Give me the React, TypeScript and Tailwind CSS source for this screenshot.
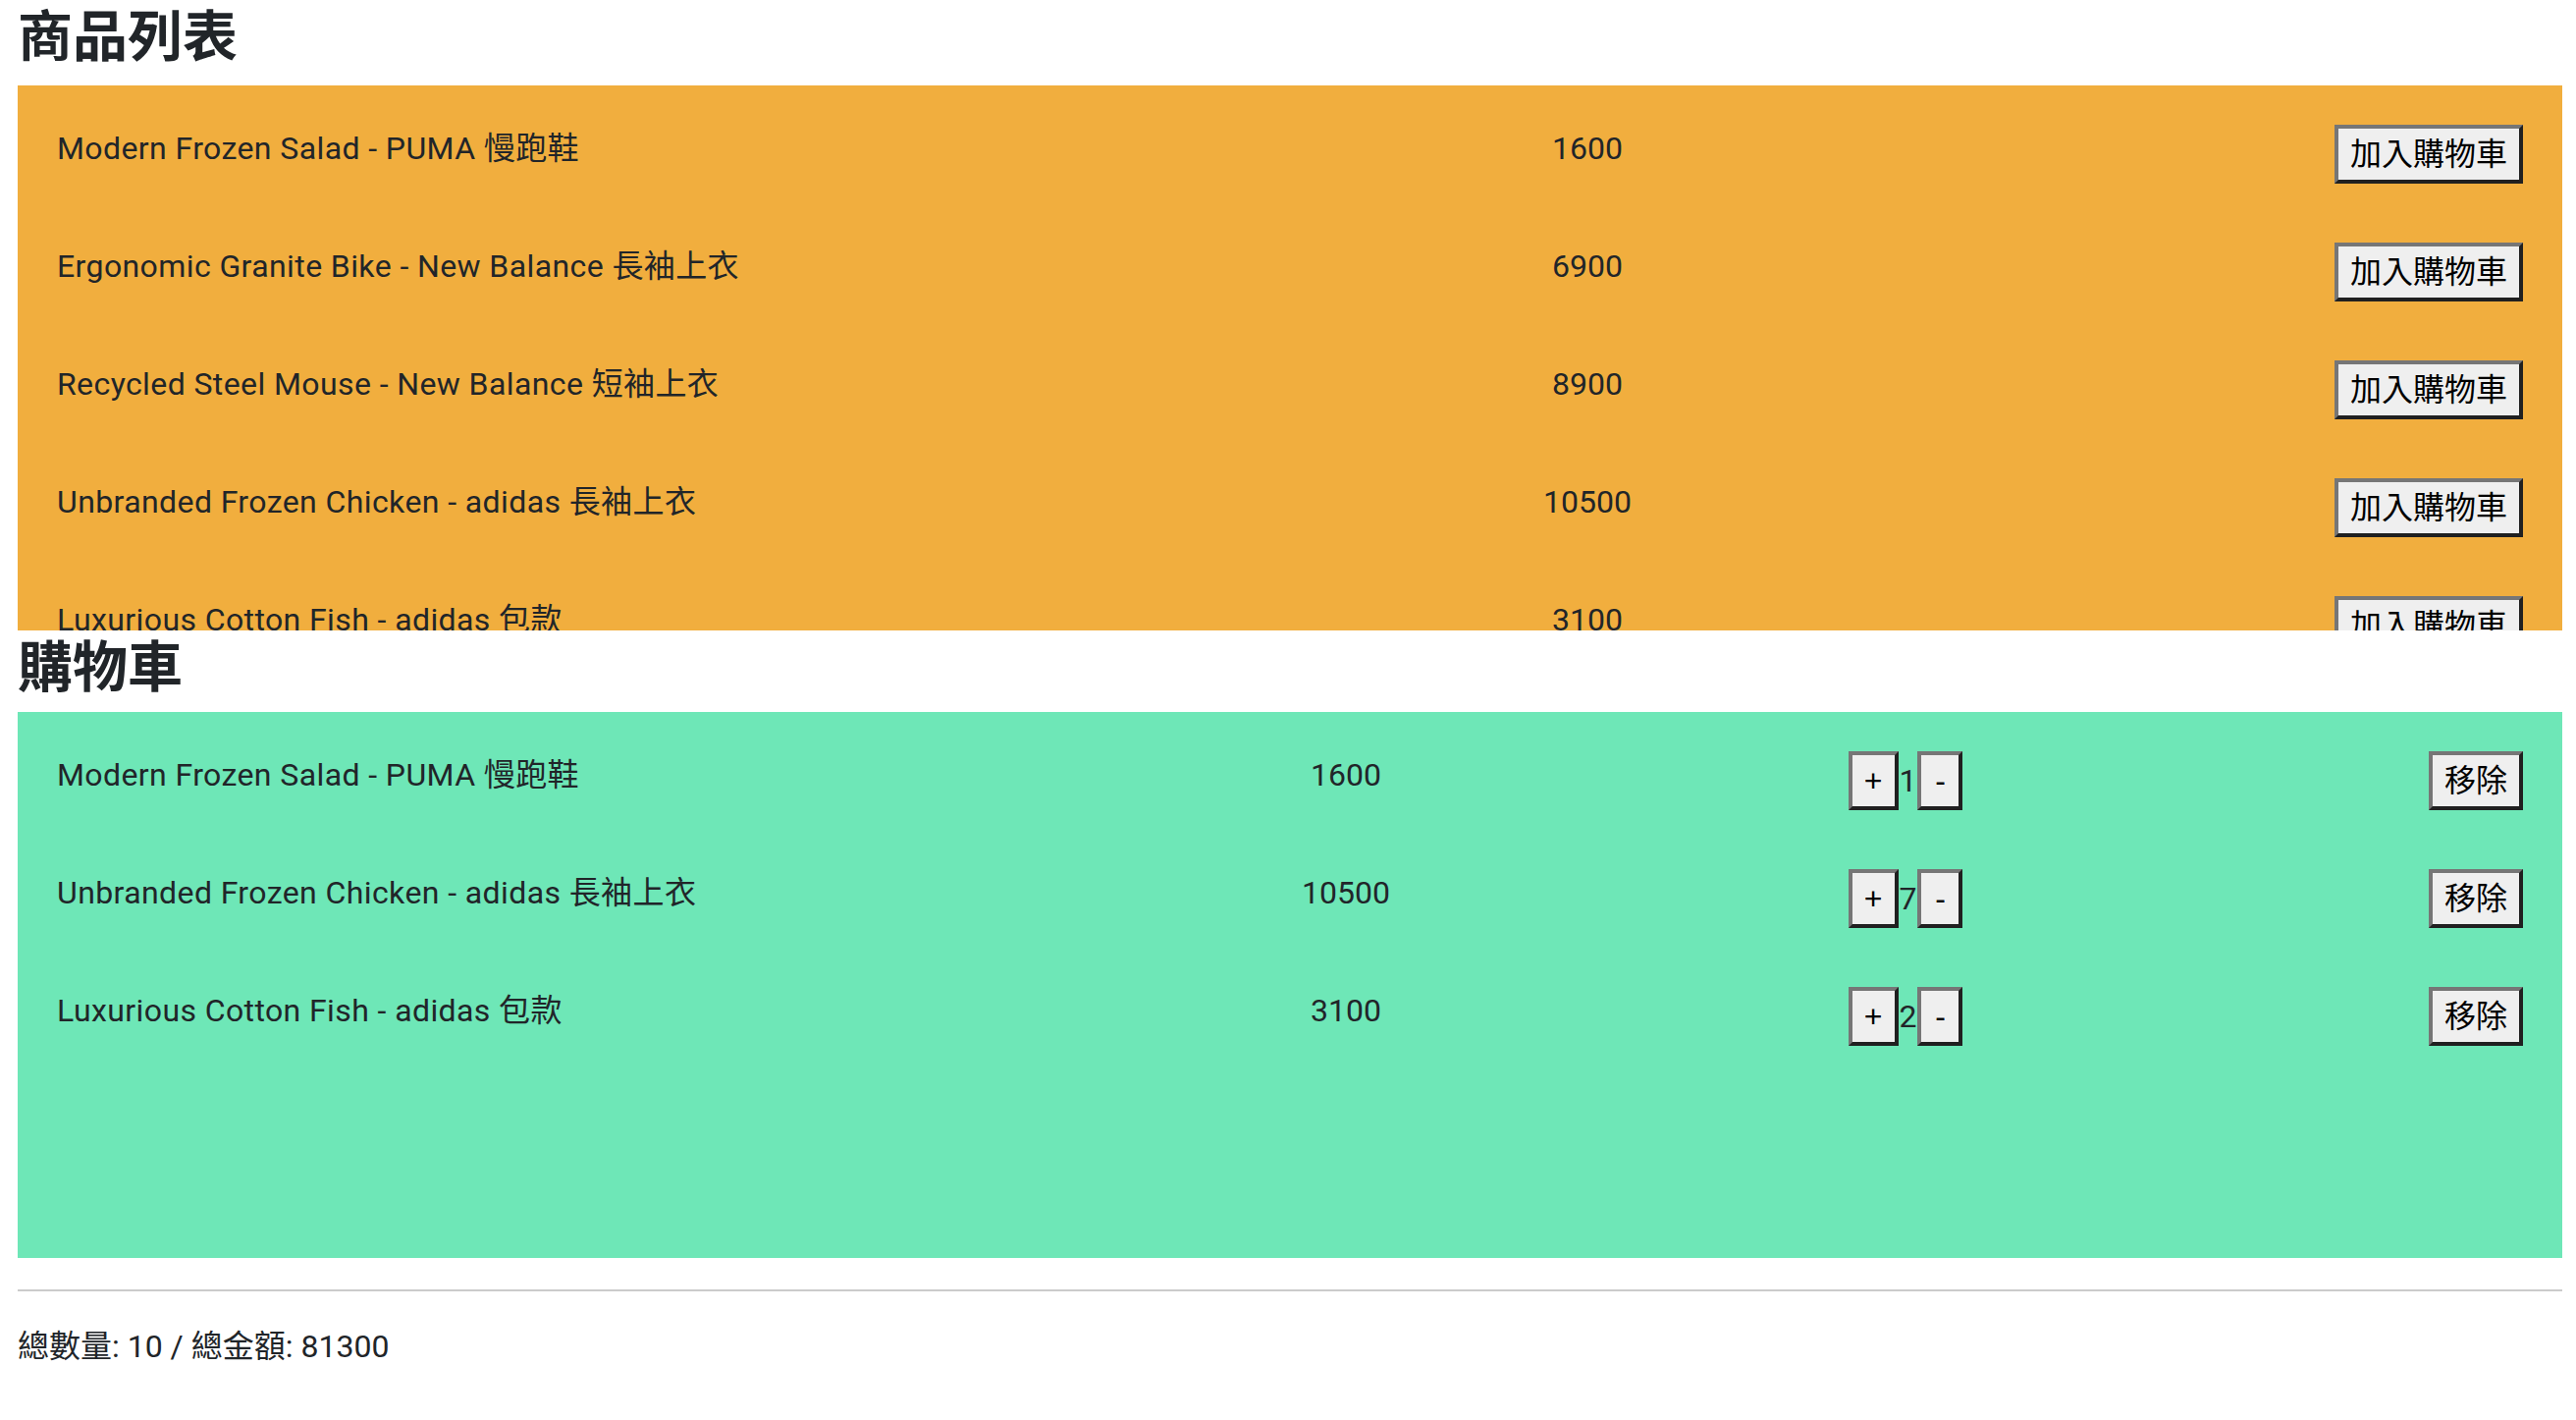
import React from "react";

const products: [string, number][] = [
  ["Modern Frozen Salad - PUMA 慢跑鞋", 1600],
  ["Ergonomic Granite Bike - New Balance 長袖上衣", 6900],
  ["Recycled Steel Mouse - New Balance 短袖上衣", 8900],
  ["Unbranded Frozen Chicken - adidas 長袖上衣", 10500],
  ["Luxurious Cotton Fish - adidas 包款", 3100],
  ["Handcrafted Wooden Shoes - PUMA 慢跑鞋", 4200],
  ["Sleek Rubber Gloves - Nike 短袖上衣", 2700],
];

const cart: [string, number, number][] = [
  ["Modern Frozen Salad - PUMA 慢跑鞋", 1600, 1],
  ["Unbranded Frozen Chicken - adidas 長袖上衣", 10500, 7],
  ["Luxurious Cotton Fish - adidas 包款", 3100, 2],
];

function Btn({ children, className = "" }: { children: React.ReactNode; className?: string }) {
  return (
    <button
      className={
        "border-4 border-solid border-t-[#767676] border-l-[#767676] border-b-[#202020] border-r-[#202020] bg-[#efefef] px-[12px] py-[2px] text-[32px] leading-[48px] text-black font-['Liberation_Sans','Noto_Sans_CJK_TC',sans-serif] " +
        className
      }
    >
      {children}
    </button>
  );
}

export default function App() {
  const totalQty = cart.reduce((s, c) => s + c[2], 0);
  const totalAmt = cart.reduce((s, c) => s + c[1] * c[2], 0);
  return (
    <div className="w-[2624px] min-h-[1446px] bg-white pl-[18px] pr-[14px] text-[#212529] font-['Roboto','Noto_Sans_CJK_TC',sans-serif] text-[32px] leading-[48px]">
      <h2 className="pt-[4px] text-[56px] leading-[68px] font-semibold mb-[15px]">商品列表</h2>
      <div className="h-[555px] overflow-hidden bg-[#f1ae3e] px-[40px] pt-[40px]">
        <div className="flex flex-col gap-y-[60px]">
          {products.map(([name, price]) => (
            <div key={name} className="grid grid-cols-[1409px_300px_1fr] items-start">
              <div className="tracking-[0.4px]">{name}</div>
              <div className="text-center">{price}</div>
              <div className="flex justify-end">
                <Btn>加入購物車</Btn>
              </div>
            </div>
          ))}
        </div>
      </div>
      <h2 className="pt-[4px] text-[56px] leading-[68px] font-semibold mb-[11px]">購物車</h2>
      <div className="h-[556px] bg-[#6ee7b7] px-[40px] pt-[40px]">
        <div className="flex flex-col gap-y-[60px]">
          {cart.map(([name, price, qty]) => (
            <div key={name} className="grid grid-cols-[1163px_300px_840px_1fr] items-start">
              <div className="tracking-[0.4px]">{name}</div>
              <div className="text-center">{price}</div>
              <div className="flex justify-center items-baseline">
                <Btn className="w-[51px] px-0">+</Btn>
                <span className="px-[1px]">{qty}</span>
                <Btn className="w-[46px] px-0">-</Btn>
              </div>
              <div className="flex justify-end">
                <Btn>移除</Btn>
              </div>
            </div>
          ))}
        </div>
      </div>
      <hr className="mt-[32px] mb-[32px] border-0 border-t-2 border-solid border-t-[#cbcbcb]" />
      <p>
        總數量: {totalQty} / 總金額: {totalAmt}
      </p>
    </div>
  );
}
